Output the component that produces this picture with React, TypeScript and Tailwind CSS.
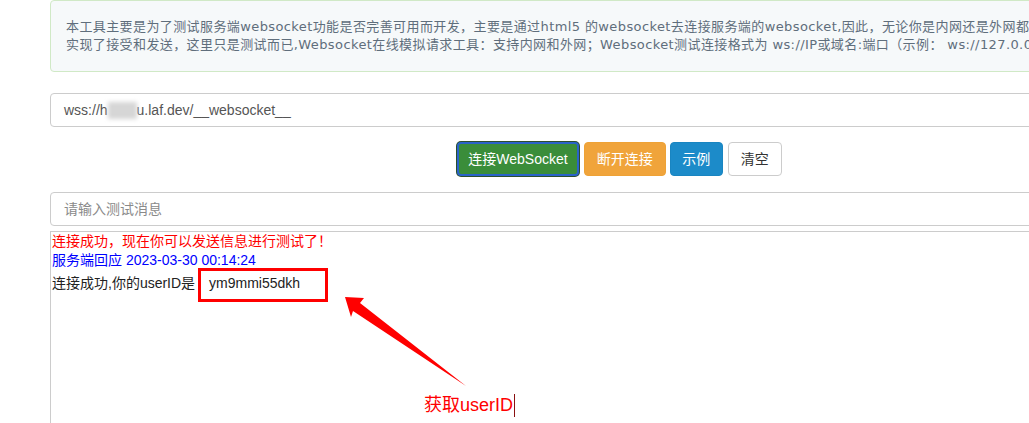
import React from 'react';

const sans = { fontFamily: '"Liberation Sans", Arial, "Noto Sans CJK SC", sans-serif' };
const verdanaLike = { fontFamily: '"DejaVu Sans", Verdana, "Noto Sans CJK SC", sans-serif' };

function Notice() {
  return (
    <div
      className="rounded-[4px] border border-[#d0e9c6] bg-[#f6f9fa] px-[15px] py-[17px] text-[13px] leading-[18px] tracking-[0.4px] text-[#5f6e7c] whitespace-nowrap"
      style={verdanaLike}
    >
      <div>
        本工具主要是为了测试服务端websocket功能是否完善可用而开发，主要是通过html5 的websocket去连接服务端的websocket,因此，无论你是内网还是外网都可以使用
      </div>
      <div>
        实现了接受和发送，这里只是测试而已,Websocket在线模拟请求工具：支持内网和外网；Websocket测试连接格式为 ws://IP或域名:端口（示例： ws://127.0.0.1:8080）
      </div>
    </div>
  );
}

function Buttons() {
  return (
    <div className="mt-[15px] flex justify-center gap-[4px] text-[14px]" style={sans}>
      <button className="mr-[1px] h-[34px] rounded-[4px] border-2 border-[#2a63c9] bg-[#3a8d3a] px-[9px] text-white shadow-[0_0_0_1px_#2c4f2c]">
        连接WebSocket
      </button>
      <button className="h-[34px] w-[82px] rounded-[4px] border border-[#eea236] bg-[#f0a43b] text-white">
        断开连接
      </button>
      <button className="h-[34px] w-[53px] rounded-[4px] border border-[#1985c1] bg-[#1c8bc9] text-white">
        示例
      </button>
      <button className="ml-[1px] h-[34px] w-[54px] rounded-[4px] border border-[#cccccc] bg-white text-[#333]">
        清空
      </button>
    </div>
  );
}

function Annotations() {
  return (
    <>
      <div className="absolute left-[198px] top-[268px] h-[34px] w-[130px] border-[3px] border-[#ff0000]" />
      <svg className="absolute left-0 top-0" width="1029" height="423" viewBox="0 0 1029 423">
        <polygon points="345,297 364,298 360,303 466,386 353,311 351,317" fill="#ff0000" />
      </svg>
      <div
        className="absolute left-[424px] top-[392px] flex items-center text-[18px] leading-[26px] text-[#ff0000]"
        style={sans}
      >
        <span>获取userID</span>
        <span className="ml-[1px] h-[23px] w-px bg-[#8a1010]" />
      </div>
    </>
  );
}

export default function App() {
  return (
    <div className="relative h-[423px] w-[1029px] overflow-hidden bg-white">
      <div className="ml-[50px] w-[1139px]">
        <Notice />

        <div
          className="mt-[21px] flex h-[34px] items-center rounded-[4px] border border-[#cccccc] px-[13px] text-[14px] text-[#555]"
          style={sans}
        >
          <span>wss://h</span>
          <span className="inline-block h-[17px] w-[29px] bg-[#d6d6d6] blur-[2px]" />
          <span>u.laf.dev/__websocket__</span>
        </div>

        <Buttons />

        <div
          className="mt-[16px] flex h-[34px] items-center rounded-[4px] border border-[#cccccc] px-[13px] text-[14px] text-[#8a8a8a]"
          style={sans}
        >
          请输入测试消息
        </div>

        <div className="mt-[5px] h-[300px] border-l border-t border-[#cccccc] pl-px text-[14px]" style={sans}>
          <div className="leading-[19px] text-[#ff0000]">连接成功，现在你可以发送信息进行测试了！</div>
          <div className="leading-[19px] text-[#0000ff]">服务端回应 2023-03-30 00:14:24</div>
          <div className="mt-[3px] leading-[20px] text-[#222]">
            连接成功,你的userID是 <span className="ml-[10px]">ym9mmi55dkh</span>
          </div>
        </div>
      </div>

      <Annotations />
    </div>
  );
}
